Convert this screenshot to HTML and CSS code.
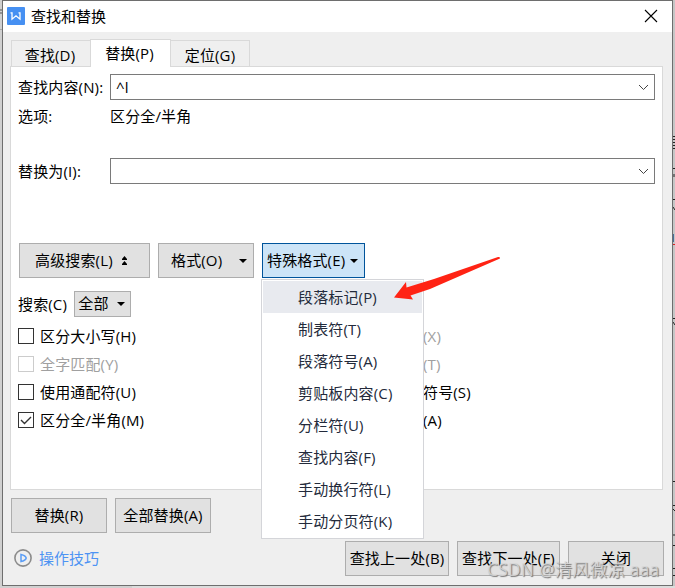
FILE: index.html
```html
<!DOCTYPE html>
<html lang="zh-CN">
<head>
<meta charset="utf-8">
<title>查找和替换</title>
<link rel="stylesheet" href="styles.css">
</head>
<body>
<svg class="backdrop" width="675" height="588" aria-hidden="true">
  <path d="M0 10h2M0 13h2" stroke="#555"/>
  <path d="M0 29.500h2" stroke="#aaa"/>
  <path d="M673 136.500h2M673 139.500h2M673 142.500h2M673 145.500h2M673 148.500h2M673 168.500h2M674 174v3M673 199.500h2M673 207l2 3M673 318.500h2M673 322l2 3M673 481.500h2M673 505.500h2M673 509l2 2M674 534v2M673 545.500h2M673 568.500h2M673 575.500h2" stroke="#222" fill="none"/>
  <path d="M673.500 234v8" stroke="#4a6f9c"/>
  <path d="M673 244.500h2" stroke="#d22"/>
  <path d="M132 586.500h543M132 587.500h543" stroke="#dcdcdc"/>
</svg>
<main class="dialog">
  <header class="titlebar">
    <svg class="logo" width="18" height="18" viewBox="0 0 18 18"><rect width="18" height="18" rx="1" fill="#4690f2"/><path d="M3.500 5.800H5v6.400L9 8.800l4 3.400V5.800h-1.500" fill="none" stroke="#fff" stroke-width="1.300"/></svg>
    <h1>查找和替换</h1>
    <svg class="close" width="14" height="14" viewBox="0 0 14 14"><path d="M1 1l12 12M13 1L1 13" stroke="#000" stroke-width="1.100"/></svg>
  </header>
  <nav class="tabs">
    <span class="tab">查找(D)</span><span class="tab active">替换(P)</span><span class="tab">定位(G)</span>
  </nav>
  <section class="panel">
    <div class="field"><label>查找内容(N):</label><div class="combo"><span>^l</span><svg width="11" height="7" viewBox="0 0 11 7"><path d="M1 1l4.500 4.500L10 1" /></svg></div></div>
    <div class="summary"><span>选项:</span><span>区分全/半角</span></div>
    <div class="field"><label>替换为(I):</label><div class="combo"><svg width="11" height="7" viewBox="0 0 11 7"><path d="M1 1l4.500 4.500L10 1" /></svg></div></div>
    <div class="tools">
      <button class="btn more"><span>高级搜索(L)</span><svg width="7" height="9" viewBox="0 0 7 9"><path d="M3.500 0L6 3H1zM1 3h5v1H1zM3.500 5L6 8H1zM1 8h5v1H1z"/></svg></button>
      <button class="btn format"><span>格式(O)</span><svg width="8" height="4" viewBox="0 0 8 4"><path d="M0 0h8L4 4z"/></svg></button>
      <div class="special">
        <button class="btn pressed"><span>特殊格式(E)</span><svg width="8" height="4" viewBox="0 0 8 4"><path d="M0 0h8L4 4z"/></svg></button>
        <ul class="menu">
          <li class="hover">段落标记(P)</li>
          <li>制表符(T)</li>
          <li>段落符号(A)</li>
          <li>剪贴板内容(C)</li>
          <li>分栏符(U)</li>
          <li>查找内容(F)</li>
          <li>手动换行符(L)</li>
          <li>手动分页符(K)</li>
        </ul>
      </div>
    </div>
    <div class="scope">搜索(C)<button class="btn"><span>全部</span><svg width="8" height="4" viewBox="0 0 8 4"><path d="M0 0h8L4 4z"/></svg></button></div>
    <div class="options">
      <div class="option"><i class="box"></i>区分大小写(H)</div><span class="off">(X)</span>
      <div class="option off"><i class="box"></i>全字匹配(Y)</div><span class="off">(T)</span>
      <div class="option"><i class="box"></i>使用通配符(U)</div><span>符号(S)</span>
      <div class="option"><i class="box"><svg width="14" height="14" viewBox="0 0 14 14"><path d="M2 7l3.500 3.500L12 4" fill="none" stroke="#333" stroke-width="1.400"/></svg></i>区分全/半角(M)</div><span>(A)</span>
    </div>
  </section>
  <div class="actions"><button class="btn"><span>替换(R)</span></button><button class="btn"><span>全部替换(A)</span></button></div>
  <footer class="footer">
    <div class="tips"><svg width="18" height="18" viewBox="0 0 18 18"><circle cx="9" cy="9" r="8.100" fill="none" stroke="#8c8c8c" stroke-width="1.600"/><path d="M7 5.500v7c2.500-.5 4.800-1.800 5.200-3.500C11.800 7.300 9.500 6 7 5.500z" fill="none" stroke="#5b9df5" stroke-width="1.500"/></svg><span>操作技巧</span></div>
    <button class="btn prev"><span>查找上一处(B)</span></button>
    <button class="btn next"><span>查找下一处(F)</span></button>
    <button class="btn"><span>关闭</span></button>
  </footer>
</main>
<svg class="arrow" width="107" height="46" viewBox="0 0 107 46"><path d="M104 2L105.500 2L106 3.500L36 34L16.500 40.500L19 44.500L0 42.500L12 27L12.500 32.500L40 24Z" fill="#ff2314"/></svg>
<div class="watermark">CSDN @清风微凉 aaa</div>
</body>
</html>
```

FILE: styles.css
```css
* { box-sizing: border-box; }
body {
  margin: 0;
  width: 675px;
  height: 588px;
  overflow: hidden;
  position: relative;
  background: linear-gradient(to right, #d0d0d0 0, #d0d0d0 132px, #c6c6c6 100%);
  font: 15px/20px "Open Sans", "Noto Sans CJK SC", sans-serif;
  letter-spacing: .15px;
  color: #000;
}
.backdrop { position: absolute; left: 0; top: 0; }
.dialog {
  position: relative;
  margin-left: 2px;
  width: 671px;
  height: 586px;
  border: 1px solid #6e6e6e;
  background: #efefef;
}
.titlebar {
  display: flex;
  align-items: center;
  height: 31px;
  padding: 0 14px 0 4px;
  background: #fff;
}
.titlebar h1 { margin: 0 0 0 6px; padding-bottom: 2px; font-size: 15px; font-weight: 400; letter-spacing: 0; }
.logo { margin-bottom: 1px; }
.close { margin-left: auto; margin-bottom: 1px; }
.tabs { display: flex; align-items: flex-end; height: 34px; padding-left: 8px; }
.tab {
  width: 80px;
  height: 26px;
  padding-right: 2px;
  border: 1px solid #d9d9d9;
  border-bottom: 0;
  text-align: center;
  line-height: 28px;
}
.tab:first-child { border-right: 0; width: 79px; }
.tab:last-child { border-left: 0; width: 79px; padding-right: 0; }
.tab.active {
  position: relative;
  z-index: 1;
  width: 81px;
  height: 28px;
  margin-bottom: -1px;
  background: #fff;
  line-height: 27px;
}
.panel {
  width: 653px;
  height: 424px;
  margin-left: 7px;
  padding: 7px 7px 0;
  border: 1px solid #d9d9d9;
  background: #fff;
}
.field { display: flex; align-items: center; height: 26px; }
.field label { width: 92px; white-space: nowrap; }
.combo {
  display: flex;
  align-items: center;
  width: 545px;
  height: 26px;
  padding: 0 5px;
  border: 1px solid #7a7a7a;
}
.combo svg { margin-left: auto; fill: none; stroke: #444; }
.summary { display: flex; height: 58px; padding-top: 6px; }
.summary span:first-child { width: 92px; }
.btn {
  display: flex;
  align-items: center;
  justify-content: center;
  width: 96px;
  height: 35px;
  padding: 0;
  border: 1px solid #adadad;
  background: #e1e1e1;
  color: #000;
  font: inherit;
  letter-spacing: inherit;
  white-space: nowrap;
}
.btn span, .tips span { padding-bottom: 2px; }
.tools { display: flex; gap: 8px; margin: 59px 0 0 1px; }
.more { width: 131px; justify-content: flex-start; padding-left: 15px; }
.more svg { margin-left: auto; margin-right: 21px; }
.format { justify-content: flex-start; padding-left: 12px; }
.format svg { margin-left: auto; margin-right: 6px; }
.special { position: relative; }
.pressed { width: 103px; justify-content: flex-start; padding-left: 4px; border-color: #00549b; background: #cce4f7; }
.pressed svg { margin-left: auto; margin-right: 6px; }
.menu {
  position: absolute;
  z-index: 2;
  left: -1px;
  top: 36px;
  width: 163px;
  height: 260px;
  margin: 0;
  padding: 1px;
  border: 1px solid #d4d5d9;
  background: #fff;
  color: #232a3b;
  list-style: none;
}
.menu li { height: 32px; padding-left: 35px; line-height: 33px; }
.menu .hover { background: #e8eaef; }
.scope { display: flex; align-items: center; width: 113px; height: 26px; margin-top: 13px; }
.scope .btn { width: 57px; height: 26px; margin-left: auto; padding-right: 2px; }
.scope .btn svg { margin-left: 8px; }
.options {
  display: grid;
  grid-template-columns: 405px auto;
  grid-auto-rows: 28px;
  align-items: center;
  margin-top: 5px;
}
.option { display: flex; align-items: center; gap: 6px; }
.box { display: block; width: 16px; height: 16px; border: 1px solid #333; background: #fff; }
.box svg { display: block; }
.off { color: #a0a0a0; }
.off .box { border-color: #ccc; }
.actions { display: flex; gap: 8px; margin: 8px 0 0 8px; }
.footer { display: flex; margin: 8px 0 0 8px; }
.tips { display: flex; align-items: center; gap: 7px; width: 334px; padding-left: 3px; color: #4d93f3; letter-spacing: 0; }
.tips svg { margin-bottom: 1px; }
.prev { width: 104px; margin-right: 8px; }
.next { width: 103px; margin-right: 8px; }
.arrow { position: absolute; z-index: 3; left: 394px; top: 255px; }
.watermark {
  position: absolute;
  z-index: 4;
  left: 487px;
  top: 560px;
  font-size: 17.3px;
  line-height: 20px;
  letter-spacing: .3px;
  white-space: nowrap;
  color: rgba(215, 215, 215, .85);
  text-shadow: 1px 1px 1px #777;
}
```
